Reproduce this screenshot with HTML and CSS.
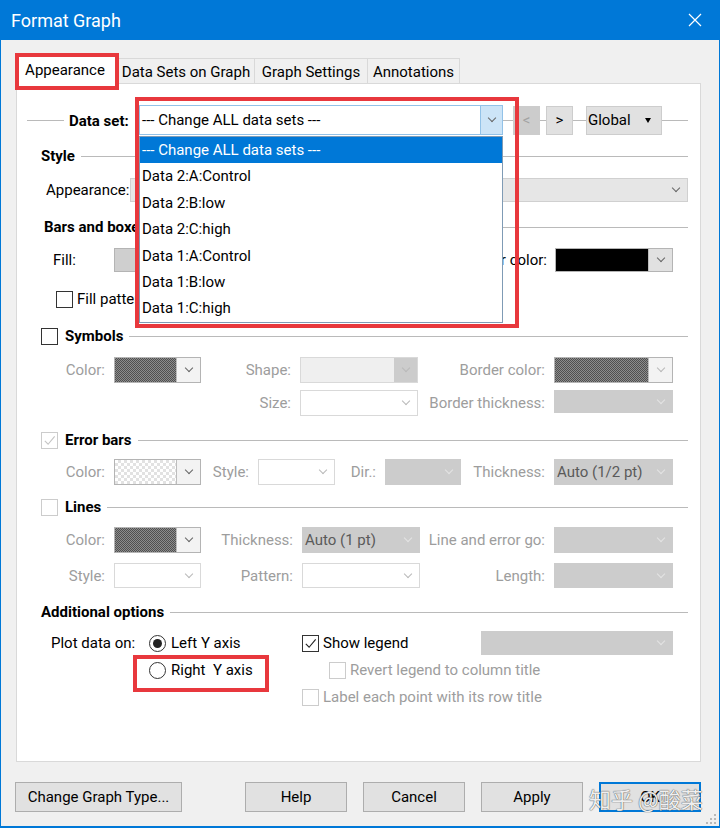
FILE: index.html
```html
<!DOCTYPE html>
<html lang="en">
<head>
  <meta charset="UTF-8">
  <title>Format Graph</title>
  <link rel="stylesheet" href="styles.css">
</head>
<body>
  <div class="window">
    <!-- Title bar -->
    <div class="titlebar">
      <span class="title">Format Graph</span>
      <svg class="close" width="14" height="14" viewBox="0 0 14 14"><path d="M1 1L13 13M13 1L1 13" stroke="#fff" stroke-width="1.2" fill="none"/></svg>
    </div>

    <!-- Tabs -->
    <div class="tabs">
      <div class="tab active tab-app">Appearance</div>
      <div class="tab tab-ds">Data Sets on Graph</div>
      <div class="tab tab-gs">Graph Settings</div>
      <div class="tab tab-ann">Annotations</div>
    </div>

    <div class="panel">
      <!-- Data set picker -->
      <div class="ds-row">
        <span class="hl hl-lead"></span>
        <span class="ds-label">Data set:</span>
        <div class="combo focus ds-combo"><span class="val">--- Change ALL data sets ---</span><span class="drop"><i class="arrow"></i></span></div>
        <span class="hl hl-a"></span>
        <span class="nav-btn off">&lt;</span>
        <span class="hl hl-b"></span>
        <span class="nav-btn">&gt;</span>
        <span class="hl hl-c"></span>
        <span class="global-btn">Global <i class="tri"></i></span>
        <span class="hl hl-end"></span>
      </div>

      <!-- Style -->
      <div class="sec-head" id="style-head"><span class="sec-title">Style</span><span class="sec-line"></span></div>
      <div class="row" id="appearance-row">
        <span class="row-lbl appearance-lbl">Appearance:</span>
        <div class="combo soft grow"><span class="val"></span><span class="drop"><i class="arrow"></i></span></div>
      </div>

      <!-- Bars and boxes -->
      <div class="sec-head" id="bars-head"><span class="sec-title">Bars and boxes</span><span class="sec-line"></span></div>
      <div class="row" id="fill-row">
        <span class="row-lbl fill-lbl">Fill:</span>
        <div class="swatch fill-sw"><span class="sw sw-gray"></span><span class="drop"><i class="arrow"></i></span></div>
        <span class="row-lbl push">Border color:</span>
        <div class="swatch wide-sw"><span class="sw sw-black"></span><span class="drop"><i class="arrow"></i></span></div>
      </div>
      <div class="row" id="pattern-row">
        <span class="chk"></span><span>Fill pattern</span>
      </div>

      <!-- Symbols -->
      <div class="sec-head" id="sym-head"><span class="chk"></span><span class="sec-title">Symbols</span><span class="sec-line"></span></div>
      <div class="grid grid-sym">
        <span class="lbl dim">Color:</span>
        <div class="swatch"><span class="sw sw-dark"></span><span class="drop"><i class="arrow"></i></span></div>
        <span class="lbl dim">Shape:</span>
        <div class="combo split"><span class="val"></span><span class="drop"><i class="arrow pale"></i></span></div>
        <span class="lbl dim">Border color:</span>
        <div class="swatch"><span class="sw sw-dark"></span><span class="drop"><i class="arrow pale"></i></span></div>
        <span></span>
        <span></span>
        <span class="lbl dim">Size:</span>
        <div class="combo"><span class="val"></span><span class="drop"><i class="arrow pale"></i></span></div>
        <span class="lbl dim">Border thickness:</span>
        <div class="combo off short"><span class="val"></span><span class="drop"><i class="arrow"></i></span></div>
      </div>

      <!-- Error bars -->
      <div class="sec-head" id="err-head"><span class="chk off checked"><svg viewBox="0 0 16 16"><path d="M3 8.5l3.5 3.5L13.5 3.5" /></svg></span><span class="sec-title">Error bars</span><span class="sec-line"></span></div>
      <div class="grid grid-err">
        <span class="lbl dim">Color:</span>
        <div class="swatch"><span class="sw sw-light"></span><span class="drop"><i class="arrow"></i></span></div>
        <span class="lbl dim">Style:</span>
        <div class="combo"><span class="val"></span><span class="drop"><i class="arrow pale"></i></span></div>
        <span class="lbl dim">Dir.:</span>
        <div class="combo off"><span class="val"></span><span class="drop"><i class="arrow"></i></span></div>
        <span class="lbl dim">Thickness:</span>
        <div class="combo off"><span class="val">Auto (1/2 pt)</span><span class="drop"><i class="arrow"></i></span></div>
      </div>

      <!-- Lines -->
      <div class="sec-head" id="lines-head"><span class="chk off"></span><span class="sec-title">Lines</span><span class="sec-line"></span></div>
      <div class="grid grid-lines">
        <span class="lbl dim">Color:</span>
        <div class="swatch"><span class="sw sw-dark"></span><span class="drop"><i class="arrow"></i></span></div>
        <span class="lbl dim">Thickness:</span>
        <div class="combo off"><span class="val">Auto (1 pt)</span><span class="drop"><i class="arrow"></i></span></div>
        <span class="lbl dim">Line and error go:</span>
        <div class="combo off"><span class="val"></span><span class="drop"><i class="arrow"></i></span></div>
        <span class="lbl dim">Style:</span>
        <div class="combo"><span class="val"></span><span class="drop"><i class="arrow pale"></i></span></div>
        <span class="lbl dim">Pattern:</span>
        <div class="combo"><span class="val"></span><span class="drop"><i class="arrow pale"></i></span></div>
        <span class="lbl dim">Length:</span>
        <div class="combo off"><span class="val"></span><span class="drop"><i class="arrow"></i></span></div>
      </div>

      <!-- Additional options -->
      <div class="sec-head" id="add-head"><span class="sec-title">Additional options</span><span class="sec-line"></span></div>
      <div class="grid grid-opts">
        <span class="opt-lbl">Plot data on:</span>
        <span class="opt"><span class="radio on"></span>Left Y axis</span>
        <span class="opt"><span class="chk checked"><svg viewBox="0 0 16 16"><path d="M3 8.5l3.5 3.5L13.5 3.5" /></svg></span>Show legend</span>
        <div class="combo off"><span class="val"></span><span class="drop"><i class="arrow"></i></span></div>
        <span></span>
        <span class="opt"><span class="radio"></span>Right&nbsp; Y axis</span>
        <span class="opt sub dim span-2"><span class="chk off"></span>Revert legend to column title</span>
        <span></span>
        <span></span>
        <span class="opt dim span-2"><span class="chk off"></span>Label each point with its row title</span>
      </div>

      <!-- open drop-down list -->
      <div class="ds-list">
        <div class="sel">--- Change ALL data sets ---</div>
        <div>Data 2:A:Control</div>
        <div>Data 2:B:low</div>
        <div>Data 2:C:high</div>
        <div>Data 1:A:Control</div>
        <div>Data 1:B:low</div>
        <div>Data 1:C:high</div>
      </div>
    </div>

    <!-- Bottom buttons -->
    <div class="buttons">
      <button class="btn btn-type">Change Graph Type...</button>
      <button class="btn">Help</button>
      <button class="btn">Cancel</button>
      <button class="btn">Apply</button>
      <button class="btn default">OK</button>
    </div>

    <!-- annotation marks -->
    <div class="mark mark-tab"></div>
    <div class="mark mark-ds"></div>
    <div class="mark mark-radio"></div>

    <div class="watermark">知乎 @酸菜</div>
    <svg class="grip" width="10" height="10" viewBox="0 0 10 10">
      <rect x="8" y="0" width="2" height="2" fill="#b8b8b8"/>
      <rect x="4" y="4" width="2" height="2" fill="#b8b8b8"/>
      <rect x="8" y="4" width="2" height="2" fill="#b8b8b8"/>
      <rect x="0" y="8" width="2" height="2" fill="#b8b8b8"/>
      <rect x="4" y="8" width="2" height="2" fill="#b8b8b8"/>
      <rect x="8" y="8" width="2" height="2" fill="#b8b8b8"/>
    </svg>
  </div>
</body>
</html>
```

FILE: styles.css
```css
:root {
  --win-blue: #0078d7;
  --face: #f0f0f0;
  --rule: #bababa;
  --dim-text: #9d9d9d;
  --mark-red: #e8383d;
}

* {
  box-sizing: border-box;
}

body {
  margin: 0;
  font-family: Roboto, "Noto Sans", sans-serif;
  font-size: 15px;
  color: #000;
  background: var(--face);
}

/* Whole dialog */
.window {
  position: relative;
  width: 720px;
  height: 828px;
  background: var(--face);
  border: 1px solid var(--win-blue);
  border-top: none;
  border-bottom-width: 2px;
  overflow: hidden;
}

.titlebar {
  height: 40px;
  padding: 0 17px 0 10px;
  background: var(--win-blue);
  color: #fff;
  font-size: 18px;
  display: flex;
  align-items: center;
  justify-content: space-between;
}

/* Tab strip */
.tabs {
  display: flex;
  align-items: flex-end;
  height: 43px;
  padding-left: 17px;
}
.tab {
  height: 25px;
  line-height: 26px;
  margin-left: -1px;
  border: 1px solid #d9d9d9;
  border-bottom: none;
  background: var(--face);
  text-align: center;
  white-space: nowrap;
}
.tab.active {
  height: 29px;
  line-height: 28px;
  margin: 0 0 -1px 0;
  background: #fff;
  position: relative;
  z-index: 1;
}
.tab-app { width: 100px; padding-right: 6px; }
.tab-ds { width: 138px; }
.tab-gs { width: 114px; }
.tab-ann { width: 93px; }

/* White page under the tabs */
.panel {
  position: relative;
  height: 679px;
  margin: 0 18px 0 15px;
  padding-right: 12px;
  background: #fff;
  border: 1px solid #d9d9d9;
}

.hl {
  flex: none;
  height: 1px;
  background: var(--rule);
}

/* Data set row */
.ds-row {
  display: flex;
  align-items: center;
  height: 30px;
  margin-top: 21px;
  padding-left: 10px;
}
.hl-lead { width: 37px; }
.hl-a { width: 10px; }
.hl-b { width: 6px; }
.hl-c { width: 13px; }
.hl-end { flex: 1; }
.ds-label {
  width: 75px;
  padding-left: 5px;
  padding-top: 1px;
  font-weight: 700;
}
.ds-combo {
  width: 364px;
  height: 30px;
  flex: none;
}
.nav-btn {
  width: 27px;
  height: 29px;
  display: flex;
  align-items: center;
  justify-content: center;
  background: #e1e1e1;
  border: 1px solid #cdcdcd;
}
.nav-btn.off {
  background: #cccccc;
  border-color: #cccccc;
  color: #a2a2a2;
}
.global-btn {
  width: 76px;
  height: 29px;
  padding: 0 10px 0 1px;
  display: flex;
  align-items: center;
  justify-content: space-between;
  background: #e1e1e1;
  border: 1px solid #cdcdcd;
}
.tri {
  border-left: 3px solid transparent;
  border-right: 3px solid transparent;
  border-top: 5px solid #000;
}

/* Section headings with rule */
.sec-head {
  display: flex;
  align-items: center;
  height: 20px;
  padding-left: 24px;
  font-weight: 700;
}
.sec-line {
  flex: 1;
  height: 1px;
  margin-left: 6px;
  background: var(--rule);
}
#style-head { margin-top: 11px; }
#bars-head { margin-top: 15px; padding-left: 27px; }
#sym-head { margin-top: 17px; }
#err-head { margin-top: 14px; }
#lines-head { margin-top: 12px; }
#add-head { margin-top: 14px; }

.row {
  display: flex;
  align-items: center;
  height: 24px;
}
#appearance-row { margin-top: 12px; padding-left: 29px; }
#fill-row { margin-top: 11px; padding-left: 36px; padding-right: 15px; }
#pattern-row { margin-top: 17px; height: 20px; padding-left: 39px; }
.appearance-lbl { width: 84px; }
.fill-lbl { width: 61px; }
.push { margin-left: auto; padding-right: 8px; }
.grow { flex: 1; height: 24px; }
.fill-sw { width: 87px; height: 24px; }
.wide-sw { width: 118px; height: 24px; }

/* Option grids */
.grid {
  display: grid;
  padding-left: 24px;
}
.grid-sym {
  grid-template-columns: 73px 87px 99px 118px 136px 119px;
  grid-template-rows: 26px 26px;
  row-gap: 7px;
  margin-top: 11px;
}
.grid-err {
  grid-template-columns: 73px 87px 57px 77px 50px 76px 93px 119px;
  grid-template-rows: 26px;
  margin-top: 9px;
}
.grid-lines {
  grid-template-columns: 73px 87px 101px 118px 134px 119px;
  grid-template-rows: 26px 25px;
  row-gap: 10px;
  margin-top: 10px;
}
.grid-opts {
  padding-left: 34px;
  grid-template-columns: 98px 153px 179px 192px;
  grid-template-rows: 24px 24px 24px;
  row-gap: 3px;
  margin-top: 9px;
}
.lbl {
  align-self: center;
  text-align: right;
  padding-right: 9px;
  white-space: nowrap;
}
.dim { color: var(--dim-text); }
.opt-lbl { align-self: center; }
.opt {
  display: flex;
  align-items: center;
  white-space: nowrap;
}
.opt.sub { padding-left: 27px; }
.span-2 { grid-column: span 2; }

/* Combo boxes */
.combo {
  display: flex;
  align-items: stretch;
  border: 1px solid #d9d9d9;
  background: #fff;
}
.combo .val {
  flex: 1;
  display: flex;
  align-items: center;
  padding-left: 2px;
  white-space: nowrap;
  overflow: hidden;
}
.drop {
  width: 23px;
  flex: none;
  display: flex;
  align-items: center;
  justify-content: center;
}
.arrow {
  display: block;
  width: 6px;
  height: 6px;
  margin-top: -4px;
  border-right: 1px solid #666;
  border-bottom: 1px solid #666;
  transform: rotate(45deg);
}
.arrow.pale { border-color: #b9b9b9; }
.combo.focus { border-color: #92c2e8; }
.combo.focus .drop {
  width: 22px;
  background: #cce4f7;
  border-left: 1px solid #92c2e8;
}
.combo.soft {
  background: #e6e6e6;
  border-color: #d0d0d0;
}
.combo.off {
  background: #cccccc;
  border-color: #cccccc;
  color: #5a5a5a;
}
.combo.off .arrow { border-color: #e4e4e4; }
.combo.split {
  background: #efefef;
  border-color: #d9d9d9;
}
.combo.split .drop { background: #cccccc; }
.combo.short { height: 23px; }

/* Colour swatches */
.swatch {
  display: flex;
  border: 1px solid #b4b4b4;
  background: #f3f3f3;
}
.swatch .sw { flex: 1; }
.swatch .drop {
  width: 24px;
  border-left: 1px solid #bdbdbd;
}
.sw-dark {
  background: repeating-conic-gradient(#4f4f4f 0 25%, #8c8c8c 0 50%) 0 0 / 2px 2px;
}
.sw-light {
  background: repeating-conic-gradient(#e2e2e2 0 25%, #fff 0 50%) 0 0 / 6px 6px;
}
.sw-gray { background: #cfcfcf; }
.sw-black { background: #000; }
#fill-row .swatch .drop { background: #e1e1e1; }

/* Check boxes and radios */
.chk {
  flex: none;
  width: 17px;
  height: 17px;
  margin-right: 7px;
  border: 1px solid #333;
  background: #fff;
}
.chk svg {
  display: block;
  width: 15px;
  height: 15px;
  fill: none;
  stroke: #222;
  stroke-width: 1.2;
}
.chk.off { border-color: #cccccc; }
.chk.off svg { stroke: #c4c4c4; }
#pattern-row .chk { margin-right: 4px; }
.grid-opts .chk { margin-right: 4px; }
.radio {
  flex: none;
  width: 17px;
  height: 17px;
  margin-right: 5px;
  border: 1px solid #333;
  border-radius: 50%;
  display: flex;
  align-items: center;
  justify-content: center;
}
.radio.on::after {
  content: "";
  width: 9px;
  height: 9px;
  border-radius: 50%;
  background: #222;
}

/* Open drop-down list of data sets */
.ds-list {
  position: absolute;
  left: 122px;
  top: 52px;
  width: 364px;
  background: #fff;
  border: 1px solid #7f9bb5;
  z-index: 5;
}
.ds-list div {
  height: 26.4px;
  line-height: 26.4px;
  padding-left: 2px;
}
.ds-list .sel {
  background: var(--win-blue);
  color: #fff;
}

/* Bottom buttons */
.buttons {
  display: flex;
  gap: 16px;
  margin-top: 20px;
  padding-left: 14px;
}
.btn {
  width: 102px;
  height: 30px;
  padding: 0;
  font: inherit;
  color: #000;
  background: #e1e1e1;
  border: 1px solid #adadad;
}
.btn-type {
  width: 167px;
  margin-right: 47px;
}
.btn.default {
  border: 2px solid var(--win-blue);
}

/* Red highlight boxes drawn over the shot */
.mark {
  position: absolute;
  border: 4px solid var(--mark-red);
  z-index: 10;
}
.mark-tab { left: 14px; top: 53px; width: 104px; height: 37px; }
.mark-ds { left: 134px; top: 97px; width: 384px; height: 231px; }
.mark-radio { left: 132px; top: 655px; width: 136px; height: 37px; }

.watermark {
  position: absolute;
  left: 588px;
  top: 782px;
  z-index: 11;
  font-family: "Noto Sans CJK SC", sans-serif;
  font-size: 22px;
  color: rgba(255, 255, 255, 0.92);
  text-shadow: 0 0 1px #555, 0 0 1px #555;
}
.grip {
  position: absolute;
  right: 3px;
  bottom: 2px;
}
```
